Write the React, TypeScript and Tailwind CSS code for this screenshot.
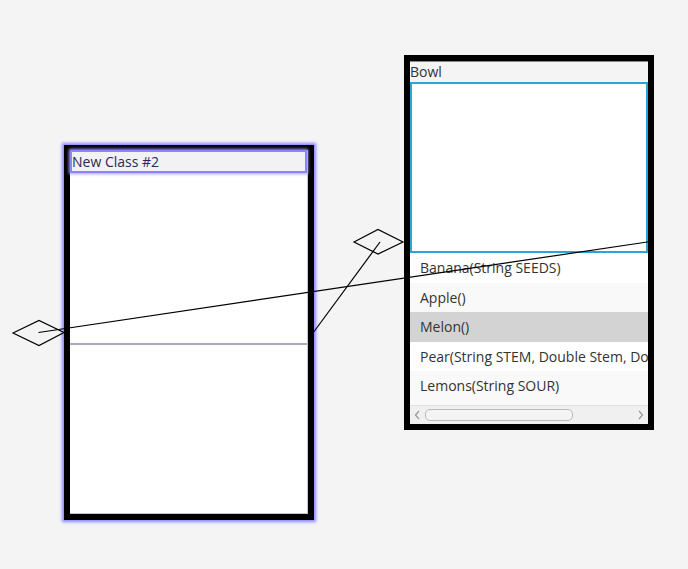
import React from 'react';

const rows = [
  { label: 'Banana(String SEEDS)', bg: 'bg-white' },
  { label: 'Apple()', bg: 'bg-[#f9f9f9]' },
  { label: 'Melon()', bg: 'bg-[#d3d3d3]' },
  { label: 'Pear(String STEM, Double Stem, Double Leaf)', bg: 'bg-white' },
  { label: 'Lemons(String SOUR)', bg: 'bg-[#f9f9f9]' },
];

const font = { fontFamily: '"Open Sans", "Noto Sans", sans-serif' };

const App: React.FC = () => {
  return (
    <div className="relative w-[688px] h-[569px] bg-[#f4f4f4] overflow-hidden text-[#333]" style={font}>
      {/* New Class #2 (selected) */}
      <div className="absolute left-[64px] top-[145px] w-[250px] h-[375px] border-[6px] border-t-[5px] border-black shadow-[0_0_3px_2px_#8c84ff] flex flex-col">
        <div className="flex-1 flex flex-col bg-white border-b border-r border-[#c4c4cc]">
          <div className="h-[23px] bg-[#f2f2f4] border-2 border-[#8c84ff] shadow-[0_0_3px_1px_#a39dff] flex items-center text-[14px] leading-none text-[#2a2a55]">
            New Class #2
          </div>
          <div className="h-[170px]" />
          <div className="h-[2px] bg-[#aaaac0]" />
          <div className="flex-1" />
        </div>
      </div>

      {/* Bowl */}
      <div className="absolute left-[404px] top-[55px] w-[250px] h-[375px] border-[6px] border-black flex flex-col">
        <div className="flex-1 flex flex-col bg-white overflow-hidden">
          <div className="h-[21px] bg-[#f4f4f4] border-t border-[#8a8a8a] flex items-center text-[14px] leading-none">
            Bowl
          </div>
          <div className="h-[171px] border-2 border-[#2ba4d6] bg-white" />
          <div className="flex flex-col">
            {rows.map((r) => (
              <div key={r.label} className={`h-[29.5px] ${r.bg} flex items-center pl-[10px] text-[14px] whitespace-nowrap overflow-hidden`}>
                {r.label}
              </div>
            ))}
          </div>
          <div className="h-[4px] bg-[#f9f9f9]" />
          <div className="h-[19px] bg-[#f0f0f0] border-t border-[#e2e2e2] flex items-center px-[3px] gap-[3px]">
            <svg width="9" height="12" viewBox="0 0 9 12" className="shrink-0">
              <path d="M6 2 L2.5 6 L6 10" fill="none" stroke="#9a9a9a" strokeWidth="1.3" />
            </svg>
            <div className="w-[148px] h-[12px] rounded-[5px] bg-[#f4f4f4] border border-[#b9b9b9]" />
            <div className="flex-1" />
            <svg width="9" height="12" viewBox="0 0 9 12" className="shrink-0">
              <path d="M3 2 L6.5 6 L3 10" fill="none" stroke="#9a9a9a" strokeWidth="1.3" />
            </svg>
          </div>
          <div className="flex-1 bg-[#f0f0f0]" />
        </div>
      </div>

      {/* connectors */}
      <svg className="absolute inset-0 pointer-events-none" width="688" height="569">
        <polygon points="13,333 39,320.5 64,332.5 39,345.5" fill="none" stroke="#000" strokeWidth="1.2" />
        <line x1="38.5" y1="332.5" x2="654" y2="241" stroke="#000" strokeWidth="1.2" />
        <polygon points="354,242 378,229.5 403,242 378,254" fill="none" stroke="#000" strokeWidth="1.2" />
        <line x1="380" y1="242" x2="313" y2="333" stroke="#000" strokeWidth="1.2" />
      </svg>
    </div>
  );
};

export default App;
